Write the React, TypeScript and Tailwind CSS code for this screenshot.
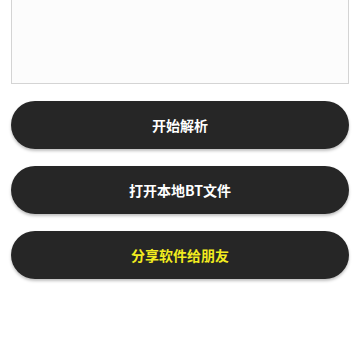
export default function App() {
  const buttons = [
    { label: "开始解析", color: "text-white" },
    { label: "打开本地BT文件", color: "text-white" },
    { label: "分享软件给朋友", color: "text-[#f2ec1f]" },
  ];

  return (
    <div
      className="w-[360px] h-[360px] bg-white overflow-hidden"
      style={{ fontFamily: '"Noto Sans CJK SC", "Liberation Sans", sans-serif' }}
    >
      <div className="mx-[11px] h-[84px] border border-t-0 border-[#d4d4d4] bg-[#fcfcfc]" />
      <div className="flex flex-col gap-[17px] px-[11px] pt-[17px]">
        {buttons.map((b) => (
          <button
            key={b.label}
            className={`h-[48px] w-full rounded-full bg-[#262626] text-[14px] font-bold shadow-[0_2px_3px_rgba(0,0,0,0.25)] ${b.color}`}
          >
            {b.label}
          </button>
        ))}
      </div>
    </div>
  );
}
